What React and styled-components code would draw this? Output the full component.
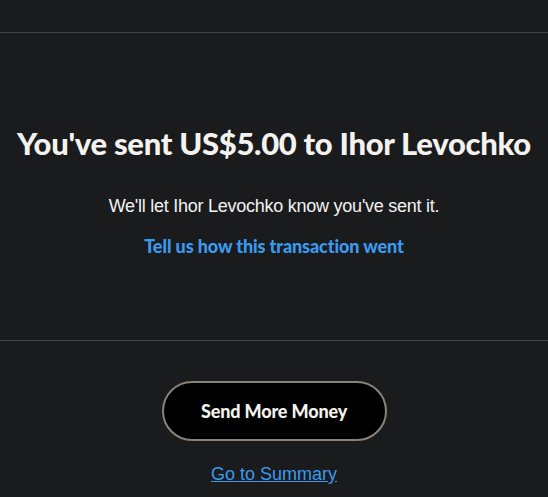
import React from 'react'
import styled, { createGlobalStyle } from 'styled-components'

const GlobalStyle = createGlobalStyle`
    html, body {
        margin: 0;
        padding: 0;
        background: #1a1b1d;
    }
    body {
        font-family: "Liberation Sans", Arial, sans-serif;
        color: #f2f2f2;
    }
`;

const Page = styled.div`
    width: 548px;
    height: 497px;
    overflow: hidden;
    display: flex;
    flex-direction: column;
`;

const TopBar = styled.div`
    height: 32px;
    border-bottom: 1px solid #46474a;
`;

const Content = styled.section`
    height: 308px;
    border-bottom: 1px solid #46474a;
    display: flex;
    flex-direction: column;
    align-items: center;
    padding-top: 92px;
    box-sizing: border-box;
`;

const Title = styled.h1`
    margin: 0;
    font-family: Lato, sans-serif;
    font-weight: 900;
    font-size: 31px;
    line-height: 36px;
    letter-spacing: -0.3px;
    color: #f4f2ee;
    text-align: center;
`;

const Message = styled.p`
    margin: 33px 0 0;
    font-size: 18px;
    line-height: 24px;
    letter-spacing: -0.25px;
    text-align: center;
`;

const FeedbackLink = styled.a`
    margin-top: 16px;
    font-family: Lato, sans-serif;
    font-weight: 900;
    font-size: 18px;
    line-height: 24px;
    letter-spacing: -0.1px;
    color: #3b9af0;
    text-decoration: none;
    cursor: pointer;
`;

const Footer = styled.footer`
    display: flex;
    flex-direction: column;
    align-items: center;
    padding-top: 40px;
`;

const SendButton = styled.button`
    width: 225px;
    height: 60px;
    border-radius: 30px;
    border: 2px solid #8a8277;
    background: #000;
    color: #f4f2ee;
    font-family: Lato, sans-serif;
    font-weight: 900;
    font-size: 18px;
    letter-spacing: -0.15px;
    cursor: pointer;
`;

const SummaryLink = styled.a`
    margin-top: 21px;
    font-size: 18px;
    line-height: 24px;
    letter-spacing: 0;
    color: #3b9af0;
    text-decoration: underline;
    cursor: pointer;
`;

export default function App() {
    return (
        <Page>
            <GlobalStyle />
            <TopBar />
            <Content>
                <Title>You've sent US$5.00 to Ihor Levochko</Title>
                <Message>We'll let Ihor Levochko know you've sent it.</Message>
                <FeedbackLink>Tell us how this transaction went</FeedbackLink>
            </Content>
            <Footer>
                <SendButton>Send More Money</SendButton>
                <SummaryLink>Go to Summary</SummaryLink>
            </Footer>
        </Page>
    )
}
